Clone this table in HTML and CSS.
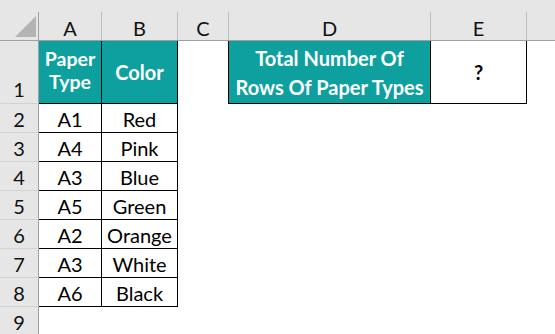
FILE: index.html
```html
<!DOCTYPE html>
<html>
<head>
<meta charset="utf-8">
<link rel="stylesheet" href="styles.css">
</head>
<body>
<div class="sheet">
  <div class="colhead">
    <div class="ch corner"><div class="tri"></div></div>
    <div class="ch">A</div>
    <div class="ch">B</div>
    <div class="ch">C</div>
    <div class="ch">D</div>
    <div class="ch">E</div>
    <div class="ch last"></div>
  </div>
  <div class="grid">
    <div class="rh rh1">1</div>
    <div class="c hd hd-a"><span class="ln">Paper</span><span class="ln">Type</span></div>
    <div class="c hd">Color</div>
    <div class="c"></div>
    <div class="c hd hd-d">Total Number Of<br>Rows Of Paper Types</div>
    <div class="c q">?</div>
    <div class="c"></div>

    <div class="rh">2</div><div class="c t a">A1</div><div class="c t b">Red</div><div class="c"></div><div class="c"></div><div class="c"></div><div class="c"></div>
    <div class="rh">3</div><div class="c t a">A4</div><div class="c t b">Pink</div><div class="c"></div><div class="c"></div><div class="c"></div><div class="c"></div>
    <div class="rh">4</div><div class="c t a">A3</div><div class="c t b">Blue</div><div class="c"></div><div class="c"></div><div class="c"></div><div class="c"></div>
    <div class="rh">5</div><div class="c t a">A5</div><div class="c t b">Green</div><div class="c"></div><div class="c"></div><div class="c"></div><div class="c"></div>
    <div class="rh">6</div><div class="c t a">A2</div><div class="c t b">Orange</div><div class="c"></div><div class="c"></div><div class="c"></div><div class="c"></div>
    <div class="rh">7</div><div class="c t a">A3</div><div class="c t b">White</div><div class="c"></div><div class="c"></div><div class="c"></div><div class="c"></div>
    <div class="rh">8</div><div class="c t a">A6</div><div class="c t b">Black</div><div class="c"></div><div class="c"></div><div class="c"></div><div class="c"></div>
    <div class="rh">9</div><div class="c"></div><div class="c"></div><div class="c"></div><div class="c"></div><div class="c"></div><div class="c"></div>
  </div>
</div>
</body>
</html>
```
FILE: styles.css
```css
* { box-sizing: border-box; }
html, body { margin: 0; padding: 0; background: #fff; }
body { font-family: Lato, "Noto Sans", sans-serif; color: #000; }
.sheet { width: 555px; height: 334px; overflow: hidden; position: relative; }

.colhead {
  display: grid;
  grid-template-columns: 39px 63px 76px 51px 202px 96px 1fr;
  height: 41px;
  padding-top: 12px;
  background: #e6e6e6;
  border-bottom: 1px solid #9f9f9f;
}
.ch {
  border-right: 1px solid #bdbdbd;
  display: flex;
  align-items: center;
  justify-content: center;
  font-size: 20px;
  padding-top: 3px;
  color: #111;
}
.ch.corner { border-right: 1px solid #a0a0a0; position: relative; }
.ch.last { border-right: none; }
.tri {
  position: absolute;
  right: 2px;
  bottom: 3px;
  width: 0; height: 0;
  border-left: 21px solid transparent;
  border-bottom: 21px solid #b4b4b4;
}

.grid {
  display: grid;
  grid-template-columns: 39px 63px 76px 50px 203px 96px 1fr;
  grid-template-rows: 63px repeat(8, 29px) 40px;
}
.rh {
  background: #e6e6e6;
  border-right: 1px solid #a0a0a0;
  border-bottom: 1px solid #d2d2d2;
  display: flex;
  align-items: center;
  justify-content: center;
  font-size: 20px;
  padding-top: 2px;
  color: #111;
}
.rh1 { align-items: flex-end; padding-bottom: 2px; }

.c { display: flex; align-items: center; justify-content: center; }
.hd {
  background: #0e9f9f;
  color: #fff;
  font-weight: 700;
  font-size: 20px;
  text-align: center;
  border-right: 1px solid #000;
  border-bottom: 1px solid #000;
}
.hd-a { flex-direction: column; padding-bottom: 4px; font-size: 19.5px; }
.hd-a .ln { display: block; line-height: 23px; }
.hd-d { line-height: 29px; border-left: 1px solid #000; padding-top: 1px; }
.q {
  border-right: 1px solid #000;
  border-bottom: 1px solid #000;
  font-weight: 700;
  font-size: 20px;
}
.t {
  font-size: 20px;
  border-right: 1px solid #000;
  border-bottom: 1px solid #000;
  padding-top: 2px;
}
```
